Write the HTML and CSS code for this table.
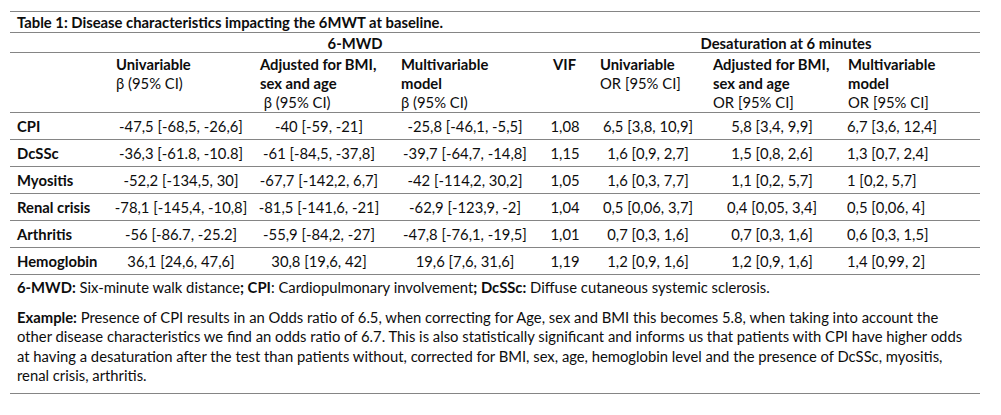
FILE: index.html
```html
<!DOCTYPE html>
<html lang="en">
<head>
<meta charset="utf-8">
<title>Table 1</title>
<link rel="stylesheet" href="styles.css">
</head>
<body>
<div class="sheet">
  <div class="title">Table 1: Disease characteristics impacting the 6MWT at baseline.</div>

  <div class="row grp">
    <div class="c0"></div>
    <div class="span-a">6-MWD</div>
    <div class="span-b">Desaturation at 6 minutes</div>
  </div>

  <div class="row head">
    <div class="c0"></div>
    <div class="h h1"><b>Univariable</b><br>β (95% CI)</div>
    <div class="h h2"><b>Adjusted for BMI,<br>sex and age</b><br>&nbsp;β (95% CI)</div>
    <div class="h h3"><b>Multivariable<br>model</b><br>β (95% CI)</div>
    <div class="h h4"><b>VIF</b></div>
    <div class="h h5"><b>Univariable</b><br>OR [95% CI]</div>
    <div class="h h6"><b>Adjusted for BMI,<br>sex and age</b><br>OR [95% CI]</div>
    <div class="h h7"><b>Multivariable<br>model</b><br>OR [95% CI]</div>
  </div>

  <div class="row data">
    <div class="lbl">CPI</div>
    <div class="d">-47,5 [-68,5, -26,6]</div>
    <div class="d">-40 [-59, -21]</div>
    <div class="d">-25,8 [-46,1, -5,5]</div>
    <div class="d">1,08</div>
    <div class="d">6,5 [3,8, 10,9]</div>
    <div class="d">5,8 [3,4, 9,9]</div>
    <div class="d last">6,7 [3,6, 12,4]</div>
  </div>
  <div class="row data">
    <div class="lbl">DcSSc</div>
    <div class="d">-36,3 [-61.8, -10.8]</div>
    <div class="d">-61 [-84,5, -37,8]</div>
    <div class="d">-39,7 [-64,7, -14,8]</div>
    <div class="d">1,15</div>
    <div class="d">1,6 [0,9, 2,7]</div>
    <div class="d">1,5 [0,8, 2,6]</div>
    <div class="d last">1,3 [0,7, 2,4]</div>
  </div>
  <div class="row data">
    <div class="lbl">Myositis</div>
    <div class="d">-52,2 [-134,5, 30]</div>
    <div class="d">-67,7 [-142,2, 6,7]</div>
    <div class="d">-42 [-114,2, 30,2]</div>
    <div class="d">1,05</div>
    <div class="d">1,6 [0,3, 7,7]</div>
    <div class="d">1,1 [0,2, 5,7]</div>
    <div class="d last">1 [0,2, 5,7]</div>
  </div>
  <div class="row data">
    <div class="lbl">Renal crisis</div>
    <div class="d">-78,1 [-145,4, -10,8]</div>
    <div class="d">-81,5 [-141,6, -21]</div>
    <div class="d">-62,9 [-123,9, -2]</div>
    <div class="d">1,04</div>
    <div class="d">0,5 [0,06, 3,7]</div>
    <div class="d">0,4 [0,05, 3,4]</div>
    <div class="d last">0,5 [0,06, 4]</div>
  </div>
  <div class="row data">
    <div class="lbl">Arthritis</div>
    <div class="d">-56 [-86.7, -25.2]</div>
    <div class="d">-55,9 [-84,2, -27]</div>
    <div class="d">-47,8 [-76,1, -19,5]</div>
    <div class="d">1,01</div>
    <div class="d">0,7 [0,3, 1,6]</div>
    <div class="d">0,7 [0,3, 1,6]</div>
    <div class="d last">0,6 [0,3, 1,5]</div>
  </div>
  <div class="row data">
    <div class="lbl">Hemoglobin</div>
    <div class="d">36,1 [24,6, 47,6]</div>
    <div class="d">30,8 [19,6, 42]</div>
    <div class="d">19,6 [7,6, 31,6]</div>
    <div class="d">1,19</div>
    <div class="d">1,2 [0,9, 1,6]</div>
    <div class="d">1,2 [0,9, 1,6]</div>
    <div class="d last">1,4 [0,99, 2]</div>
  </div>

  <div class="notes">
    <p class="abbr"><b>6-MWD:</b> Six-minute walk distance<b>; CPI</b>: Cardiopulmonary involvement<b>; DcSSc:</b> Diffuse cutaneous systemic sclerosis.</p>
    <p class="example"><b>Example:</b> Presence of CPI results in an Odds ratio of 6.5, when correcting for Age, sex and BMI this becomes 5.8, when taking into account the<br>other disease characteristics we find an odds ratio of 6.7. This is also statistically significant and informs us that patients with CPI have higher odds<br>at having a desaturation after the test than patients without, corrected for BMI, sex, age, hemoglobin level and the presence of DcSSc, myositis,<br>renal crisis, arthritis.</p>
  </div>
</div>
</body>
</html>
```

FILE: styles.css
```css
html, body {
  margin: 0;
  padding: 0;
  background: #ffffff;
}

body {
  font-family: "Lato", "Liberation Sans", sans-serif;
  font-size: 14.8px;
  color: #0d0d0d;
}

.sheet {
  margin: 11px 0 0 10px;
  width: 970px;
}

b {
  font-weight: 700;
}

.title {
  border-top: 1px solid #858585;
  border-bottom: 1px solid #858585;
  height: 20px;
  line-height: 21px;
  padding-left: 7px;
  font-weight: 700;
  white-space: nowrap;
}

.row {
  display: grid;
  grid-template-columns: 100px 142px 134px 158px 42px 124px 124px 146px;
  border-bottom: 1px solid #858585;
  white-space: nowrap;
}

.grp {
  height: 19px;
  line-height: 20px;
  font-weight: 700;
}

.span-a {
  grid-column: 2 / 6;
  text-align: center;
  padding-left: 14px;
}

.span-b {
  grid-column: 6 / 9;
  text-align: center;
  padding-left: 6px;
}

.head {
  height: 59px;
  line-height: 19px;
}

.h {
  padding-top: 2px;
}

.h1 { padding-left: 6px; }
.h2 { padding-left: 8px; }
.h3 { padding-left: 15px; }
.h4 { padding-left: 9px; }
.h5 { padding-left: 14px; }
.h6 { padding-left: 3px; }
.h7 { padding-left: 14px; }

.data {
  height: 26px;
  align-items: center;
}

.lbl {
  padding-left: 7px;
  font-weight: 700;
}

.d {
  text-align: center;
}

.d.last {
  text-align: left;
  padding-left: 13px;
}

.notes {
  border-bottom: 1px solid #858585;
  padding: 3px 0 7px 7px;
  line-height: 19.6px;
  white-space: nowrap;
}

.notes p {
  margin: 0;
}

.notes .abbr {
  margin-bottom: 10px;
}
```
